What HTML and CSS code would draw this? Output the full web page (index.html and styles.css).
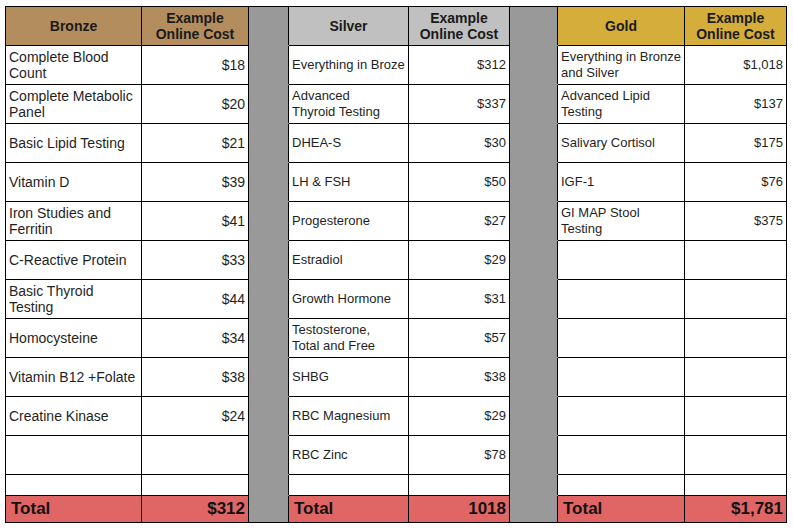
FILE: index.html
```html
<!DOCTYPE html>
<html lang="en">
<head>
<meta charset="utf-8">
<title>Testing Packages</title>
<link rel="stylesheet" href="styles.css">
</head>
<body>
<table class="sheet">
  <colgroup>
    <col class="c-bn"><col class="c-bc"><col class="c-s1">
    <col class="c-sn"><col class="c-sc"><col class="c-s2">
    <col class="c-gn"><col class="c-gc">
  </colgroup>
  <thead>
    <tr class="head">
      <th class="bronze">Bronze</th>
      <th class="bronze">Example<br>Online Cost</th>
      <th class="sep"></th>
      <th class="silver">Silver</th>
      <th class="silver">Example<br>Online Cost</th>
      <th class="sep"></th>
      <th class="gold">Gold</th>
      <th class="gold">Example<br>Online Cost</th>
    </tr>
  </thead>
  <tbody>
    <tr>
      <td class="name big">Complete Blood Count</td><td class="cost big">$18</td><td class="sep"></td>
      <td class="name">Everything in Broze</td><td class="cost">$312</td><td class="sep"></td>
      <td class="name">Everything in Bronze and Silver</td><td class="cost">$1,018</td>
    </tr>
    <tr>
      <td class="name big">Complete Metabolic Panel</td><td class="cost big">$20</td><td class="sep"></td>
      <td class="name">Advanced<br>Thyroid Testing</td><td class="cost">$337</td><td class="sep"></td>
      <td class="name">Advanced Lipid<br>Testing</td><td class="cost">$137</td>
    </tr>
    <tr>
      <td class="name big">Basic Lipid Testing</td><td class="cost big">$21</td><td class="sep"></td>
      <td class="name">DHEA-S</td><td class="cost">$30</td><td class="sep"></td>
      <td class="name">Salivary Cortisol</td><td class="cost">$175</td>
    </tr>
    <tr>
      <td class="name big">Vitamin D</td><td class="cost big">$39</td><td class="sep"></td>
      <td class="name">LH &amp; FSH</td><td class="cost">$50</td><td class="sep"></td>
      <td class="name">IGF-1</td><td class="cost">$76</td>
    </tr>
    <tr>
      <td class="name big">Iron Studies and Ferritin</td><td class="cost big">$41</td><td class="sep"></td>
      <td class="name">Progesterone</td><td class="cost">$27</td><td class="sep"></td>
      <td class="name">GI MAP Stool<br>Testing</td><td class="cost">$375</td>
    </tr>
    <tr>
      <td class="name big">C-Reactive Protein</td><td class="cost big">$33</td><td class="sep"></td>
      <td class="name">Estradiol</td><td class="cost">$29</td><td class="sep"></td>
      <td class="name"></td><td class="cost"></td>
    </tr>
    <tr>
      <td class="name big">Basic Thyroid Testing</td><td class="cost big">$44</td><td class="sep"></td>
      <td class="name">Growth Hormone</td><td class="cost">$31</td><td class="sep"></td>
      <td class="name"></td><td class="cost"></td>
    </tr>
    <tr>
      <td class="name big">Homocysteine</td><td class="cost big">$34</td><td class="sep"></td>
      <td class="name">Testosterone,<br>Total and Free</td><td class="cost">$57</td><td class="sep"></td>
      <td class="name"></td><td class="cost"></td>
    </tr>
    <tr>
      <td class="name big">Vitamin B12 +Folate</td><td class="cost big">$38</td><td class="sep"></td>
      <td class="name">SHBG</td><td class="cost">$38</td><td class="sep"></td>
      <td class="name"></td><td class="cost"></td>
    </tr>
    <tr>
      <td class="name big">Creatine Kinase</td><td class="cost big">$24</td><td class="sep"></td>
      <td class="name">RBC Magnesium</td><td class="cost">$29</td><td class="sep"></td>
      <td class="name"></td><td class="cost"></td>
    </tr>
    <tr>
      <td class="name big"></td><td class="cost big"></td><td class="sep"></td>
      <td class="name">RBC Zinc</td><td class="cost">$78</td><td class="sep"></td>
      <td class="name"></td><td class="cost"></td>
    </tr>
    <tr class="spacer">
      <td></td><td></td><td class="sep"></td>
      <td></td><td></td><td class="sep"></td>
      <td></td><td></td>
    </tr>
    <tr class="total">
      <td class="tl">Total</td><td class="tv">$312</td><td class="sep"></td>
      <td class="tl">Total</td><td class="tv">1018</td><td class="sep"></td>
      <td class="tl">Total</td><td class="tv">$1,781</td>
    </tr>
  </tbody>
</table>
</body>
</html>
```
FILE: styles.css
```css
html, body {
  margin: 0;
  background: #ffffff;
}

body {
  padding: 6px 0 0 5px;
  font-family: "Liberation Sans", Arial, sans-serif;
  color: #1f1f1f;
}

.sheet {
  border-collapse: collapse;
  table-layout: fixed;
  width: 782px;
}

.c-bn { width: 136px; }
.c-bc { width: 107px; }
.c-s1 { width: 40px; }
.c-sn { width: 120px; }
.c-sc { width: 101px; }
.c-s2 { width: 48px; }
.c-gn { width: 127px; }
.c-gc { width: 102px; }

.sheet th,
.sheet td {
  border: 1px solid #000;
  padding: 0 3px;
  vertical-align: middle;
  font-size: 13px;
  line-height: 16px;
  overflow: hidden;
}

tbody tr { height: 39px; }
.head { height: 39px; }

.sheet th {
  font-size: 14px;
  font-weight: bold;
  text-align: center;
  color: #1a1a1a;
}

.bronze { background: #b38d5d; }
.silver { background: #c0c0c0; }
.gold { background: #d5ad3b; }

.sheet .sep {
  background: #999999;
  border-top-color: #999999;
  border-bottom-color: #999999;
  padding: 0;
}
.head .sep { border-top-color: #000; }
.total .sep { border-bottom-color: #000; }

.name { text-align: left; }
.cost { text-align: right; }
.sheet td.big { font-size: 14px; }

.sheet .spacer { height: 21px; }

.sheet .total { height: 27px; }
.total td {
  background: #e06666;
}
.sheet .total .tl,
.sheet .total .tv {
  font-size: 17px;
  font-weight: bold;
  color: #141010;
  line-height: 20px;
}
.sheet .total .tl { text-align: left; padding-left: 5px; }
.sheet .total .tv { text-align: right; padding-right: 3px; }
.sheet .total .sep { background: #999999; }
```
